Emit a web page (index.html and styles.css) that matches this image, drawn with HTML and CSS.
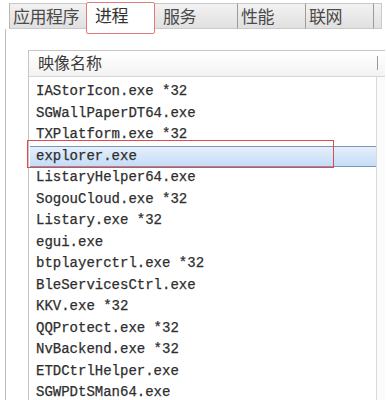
FILE: index.html
```html
<!DOCTYPE html>
<html lang="zh-CN">
<head>
<meta charset="utf-8">
<title>任务管理器</title>
<link rel="stylesheet" href="styles.css">
</head>
<body>
<div class="window">
  <div class="tabs">
    <div class="tab tab-apps">应用程序</div>
    <div class="tab tab-proc active">进程</div>
    <div class="tab tab-svc">服务</div>
    <div class="tab tab-perf">性能</div>
    <div class="tab tab-net">联网</div>
    <div class="tab-rest"></div>
  </div>
  <div class="panel">
    <div class="list">
      <div class="list-head">
        <span class="col-name">映像名称</span>
        <span class="col-sep"></span>
      </div>
      <div class="list-body">
        <div class="rows">
          <div class="row">IAStorIcon.exe *32</div>
          <div class="row">SGWallPaperDT64.exe</div>
          <div class="row">TXPlatform.exe *32</div>
          <div class="row selected">explorer.exe</div>
          <div class="row">ListaryHelper64.exe</div>
          <div class="row">SogouCloud.exe *32</div>
          <div class="row">Listary.exe *32</div>
          <div class="row">egui.exe</div>
          <div class="row">btplayerctrl.exe *32</div>
          <div class="row">BleServicesCtrl.exe</div>
          <div class="row">KKV.exe *32</div>
          <div class="row">QQProtect.exe *32</div>
          <div class="row">NvBackend.exe *32</div>
          <div class="row">ETDCtrlHelper.exe</div>
          <div class="row">SGWPDtSMan64.exe</div>
        </div>
        <div class="scroll"></div>
        <div class="mark mark-row"></div>
      </div>
    </div>
  </div>
</div>
</body>
</html>
```

FILE: styles.css
```css
html, body {
  margin: 0;
  padding: 0;
  background: #ffffff;
}

.window {
  width: 386px;
  height: 400px;
  overflow: hidden;
  position: relative;
  background: #ffffff;
}

.tabs {
  display: flex;
  align-items: flex-start;
  height: 29px;
  padding-left: 9px;
  position: relative;
  z-index: 2;
}

.tab {
  box-sizing: border-box;
  margin-top: 3px;
  height: 26px;
  background: linear-gradient(#f2f2f2, #e0e0e0);
  border-top: 1px solid #c8c8c8;
  border-right: 1px solid #9c9c9c;
  border-bottom: 1px solid #cacaca;
  font-family: "Noto Sans CJK SC", "Noto Sans", sans-serif;
  font-size: 17px;
  line-height: 24px;
  color: #4a4a4a;
  white-space: nowrap;
  letter-spacing: -0.5px;
}

.tab-apps {
  width: 77px;
  padding-left: 3px;
  border-left: 1px solid #b8b8b8;
  border-right: none;
}

.tab.active {
  margin-top: 2px;
  height: 32px;
  width: 69px;
  padding-left: 8px;
  background: #ffffff;
  border: 1px solid #e27a7a;
  border-radius: 2px;
  line-height: 24px;
  color: #333333;
}

.tab-svc {
  width: 83px;
  padding-left: 8px;
  border-left: none;
}

.tab-perf {
  width: 68px;
  padding-left: 3px;
}

.tab-net {
  width: 68px;
  padding-left: 3px;
}

.tab-rest {
  margin-top: 3px;
  width: 8px;
  height: 26px;
  box-sizing: border-box;
  background: linear-gradient(#f2f2f2, #e0e0e0);
  border-top: 1px solid #c8c8c8;
  border-right: 1px solid #cacaca;
  border-bottom: 1px solid #cacaca;
}

.panel {
  margin-left: 5px;
  height: 371px;
  border-left: 1px solid #bdbdbd;
  padding-top: 21px;
  padding-left: 22px;
  box-sizing: border-box;
}

.list {
  width: 357px;
  height: 400px;
  border-top: 1px solid #c6c6c6;
  border-left: 1px solid #c6c6c6;
  box-sizing: border-box;
}

.list-head {
  display: flex;
  align-items: flex-start;
  height: 25px;
  background: linear-gradient(#ffffff, #f3f3f3);
  border-bottom: 1px solid #d6d6d6;
  font-family: "Noto Sans CJK SC", "Noto Sans", sans-serif;
  font-size: 16px;
  color: #3a3a3a;
  padding-left: 9px;
}

.col-name {
  flex: 1;
  line-height: 22px;
}

.col-sep {
  width: 1px;
  height: 14px;
  margin-top: 5px;
  background: #9a9a9a;
  margin-right: 7px;
}

.list-body {
  display: flex;
  position: relative;
}

.rows {
  width: 348px;
  padding-top: 4px;
}

.row {
  height: 21.5px;
  line-height: 21.5px;
  padding-left: 7px;
  box-sizing: border-box;
  font-family: "Liberation Mono", "DejaVu Sans Mono", monospace;
  font-size: 14px;
  color: #2e2e2e;
  white-space: nowrap;
  -webkit-text-stroke: 0.25px #2e2e2e;
}

.row.selected {
  margin-left: 1px;
  padding-left: 6px;
  background: linear-gradient(#e4effc, #c6dcf6);
  border-top: 1px solid #7a96b8;
  border-bottom: 1px solid #7a96b8;
  line-height: 19.5px;
}

.scroll {
  width: 8px;
  border-left: 1px solid #d9d9d9;
  background: #fbfbfb;
}

.mark {
  position: absolute;
  box-sizing: border-box;
  border: 1.5px solid #e24a4a;
}

.mark-row {
  left: -2px;
  top: 63px;
  width: 307px;
  height: 28px;
}
```
